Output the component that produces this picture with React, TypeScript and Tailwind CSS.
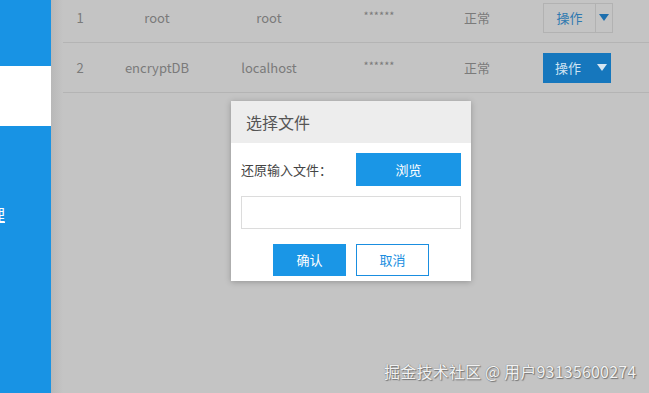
import React from "react";

const rows = [
  { id: "1", name: "root", host: "root", pwd: "******", status: "正常", filled: false },
  { id: "2", name: "encryptDB", host: "localhost", pwd: "******", status: "正常", filled: true },
];

function Caret({ color }: { color: string }) {
  return (
    <svg width="10" height="7" viewBox="0 0 10 7">
      <path d="M0 0 L10 0 L5 7 Z" fill={color} />
    </svg>
  );
}

export default function App() {
  return (
    <div
      className="relative flex w-[649px] h-[393px] overflow-hidden bg-[#c4c4c4]"
      style={{ fontFamily: '"Noto Sans CJK SC", "Open Sans", sans-serif' }}
    >
      {/* sidebar */}
      <div className="relative w-[51px] shrink-0 bg-[#1893e4] flex flex-col overflow-hidden">
        <div className="h-[66px]" />
        <div className="h-[60px] bg-white" />
        <div className="mt-[78px] -ml-[27px] text-white text-[16px] leading-[20px] underline whitespace-nowrap">管理</div>
      </div>
      <div className="w-[12px] shrink-0 bg-gradient-to-r from-[#b8b8b8] to-[#c4c4c4]" />

      {/* table */}
      <div className="flex-1 flex flex-col -mt-[7px] text-[13px] text-[#7a7a7a]">
        {rows.map((r) => (
          <div key={r.id} className="flex items-center h-[50px] border-b border-[#b4b4b4]">
            <div className="w-[34px] text-center">{r.id}</div>
            <div className="w-[120px] text-center">{r.name}</div>
            <div className="w-[104px] text-center">{r.host}</div>
            <div className="w-[116px] text-center text-[11px] -mt-[4px]">{r.pwd}</div>
            <div className="w-[80px] text-center">{r.status}</div>
            <div className="w-[26px]" />
            {r.filled ? (
              <div className="flex h-[30px] w-[68px] bg-[#1677bd] text-[#cfe3f2]">
                <div className="flex-1 flex items-center justify-center">操作</div>
                <div className="w-[18px] flex items-center justify-center">
                  <Caret color="#d6e6f2" />
                </div>
              </div>
            ) : (
              <div className="flex h-[30px] w-[70px] border border-[#b2b2b2] text-[#2f79b0]">
                <div className="flex-1 flex items-center justify-center">操作</div>
                <div className="w-[17px] border-l border-[#b2b2b2] flex items-center justify-center">
                  <Caret color="#1d6fae" />
                </div>
              </div>
            )}
          </div>
        ))}
      </div>

      {/* modal */}
      <div className="absolute left-[231px] top-[101px] w-[240px] h-[180px] bg-white shadow-[0_1px_6px_rgba(0,0,0,0.25)] flex flex-col">
        <div className="h-[42px] bg-[#ededed] flex items-center pl-[15px] text-[16px] text-[#555]">选择文件</div>
        <div className="flex flex-col px-[10px]">
          <div className="flex items-center justify-between mt-[10px] h-[33px]">
            <span className="text-[13px] text-[#444]">还原输入文件：</span>
            <div className="w-[105px] h-[33px] bg-[#1a96e6] text-white text-[13px] flex items-center justify-center">浏览</div>
          </div>
          <div className="mt-[10px] h-[33px] border border-[#dcdcdc]" />
          <div className="flex justify-center gap-[10px] mt-[15px]">
            <div className="w-[73px] h-[32px] bg-[#1a96e6] text-white text-[13px] flex items-center justify-center">确认</div>
            <div className="w-[73px] h-[32px] border border-[#1a8ee0] text-[#1a8ee0] text-[13px] flex items-center justify-center">取消</div>
          </div>
        </div>
      </div>

      {/* watermark */}
      <div
        className="absolute left-[384px] top-[360px] text-[16px] leading-[22px] tracking-[0.2px] text-[#f2f2f2] whitespace-nowrap"
        style={{ textShadow: "0 0 1px #666, 1px 1px 1px #777" }}
      >
        掘金技术社区 @ 用户93135600274
      </div>
    </div>
  );
}
